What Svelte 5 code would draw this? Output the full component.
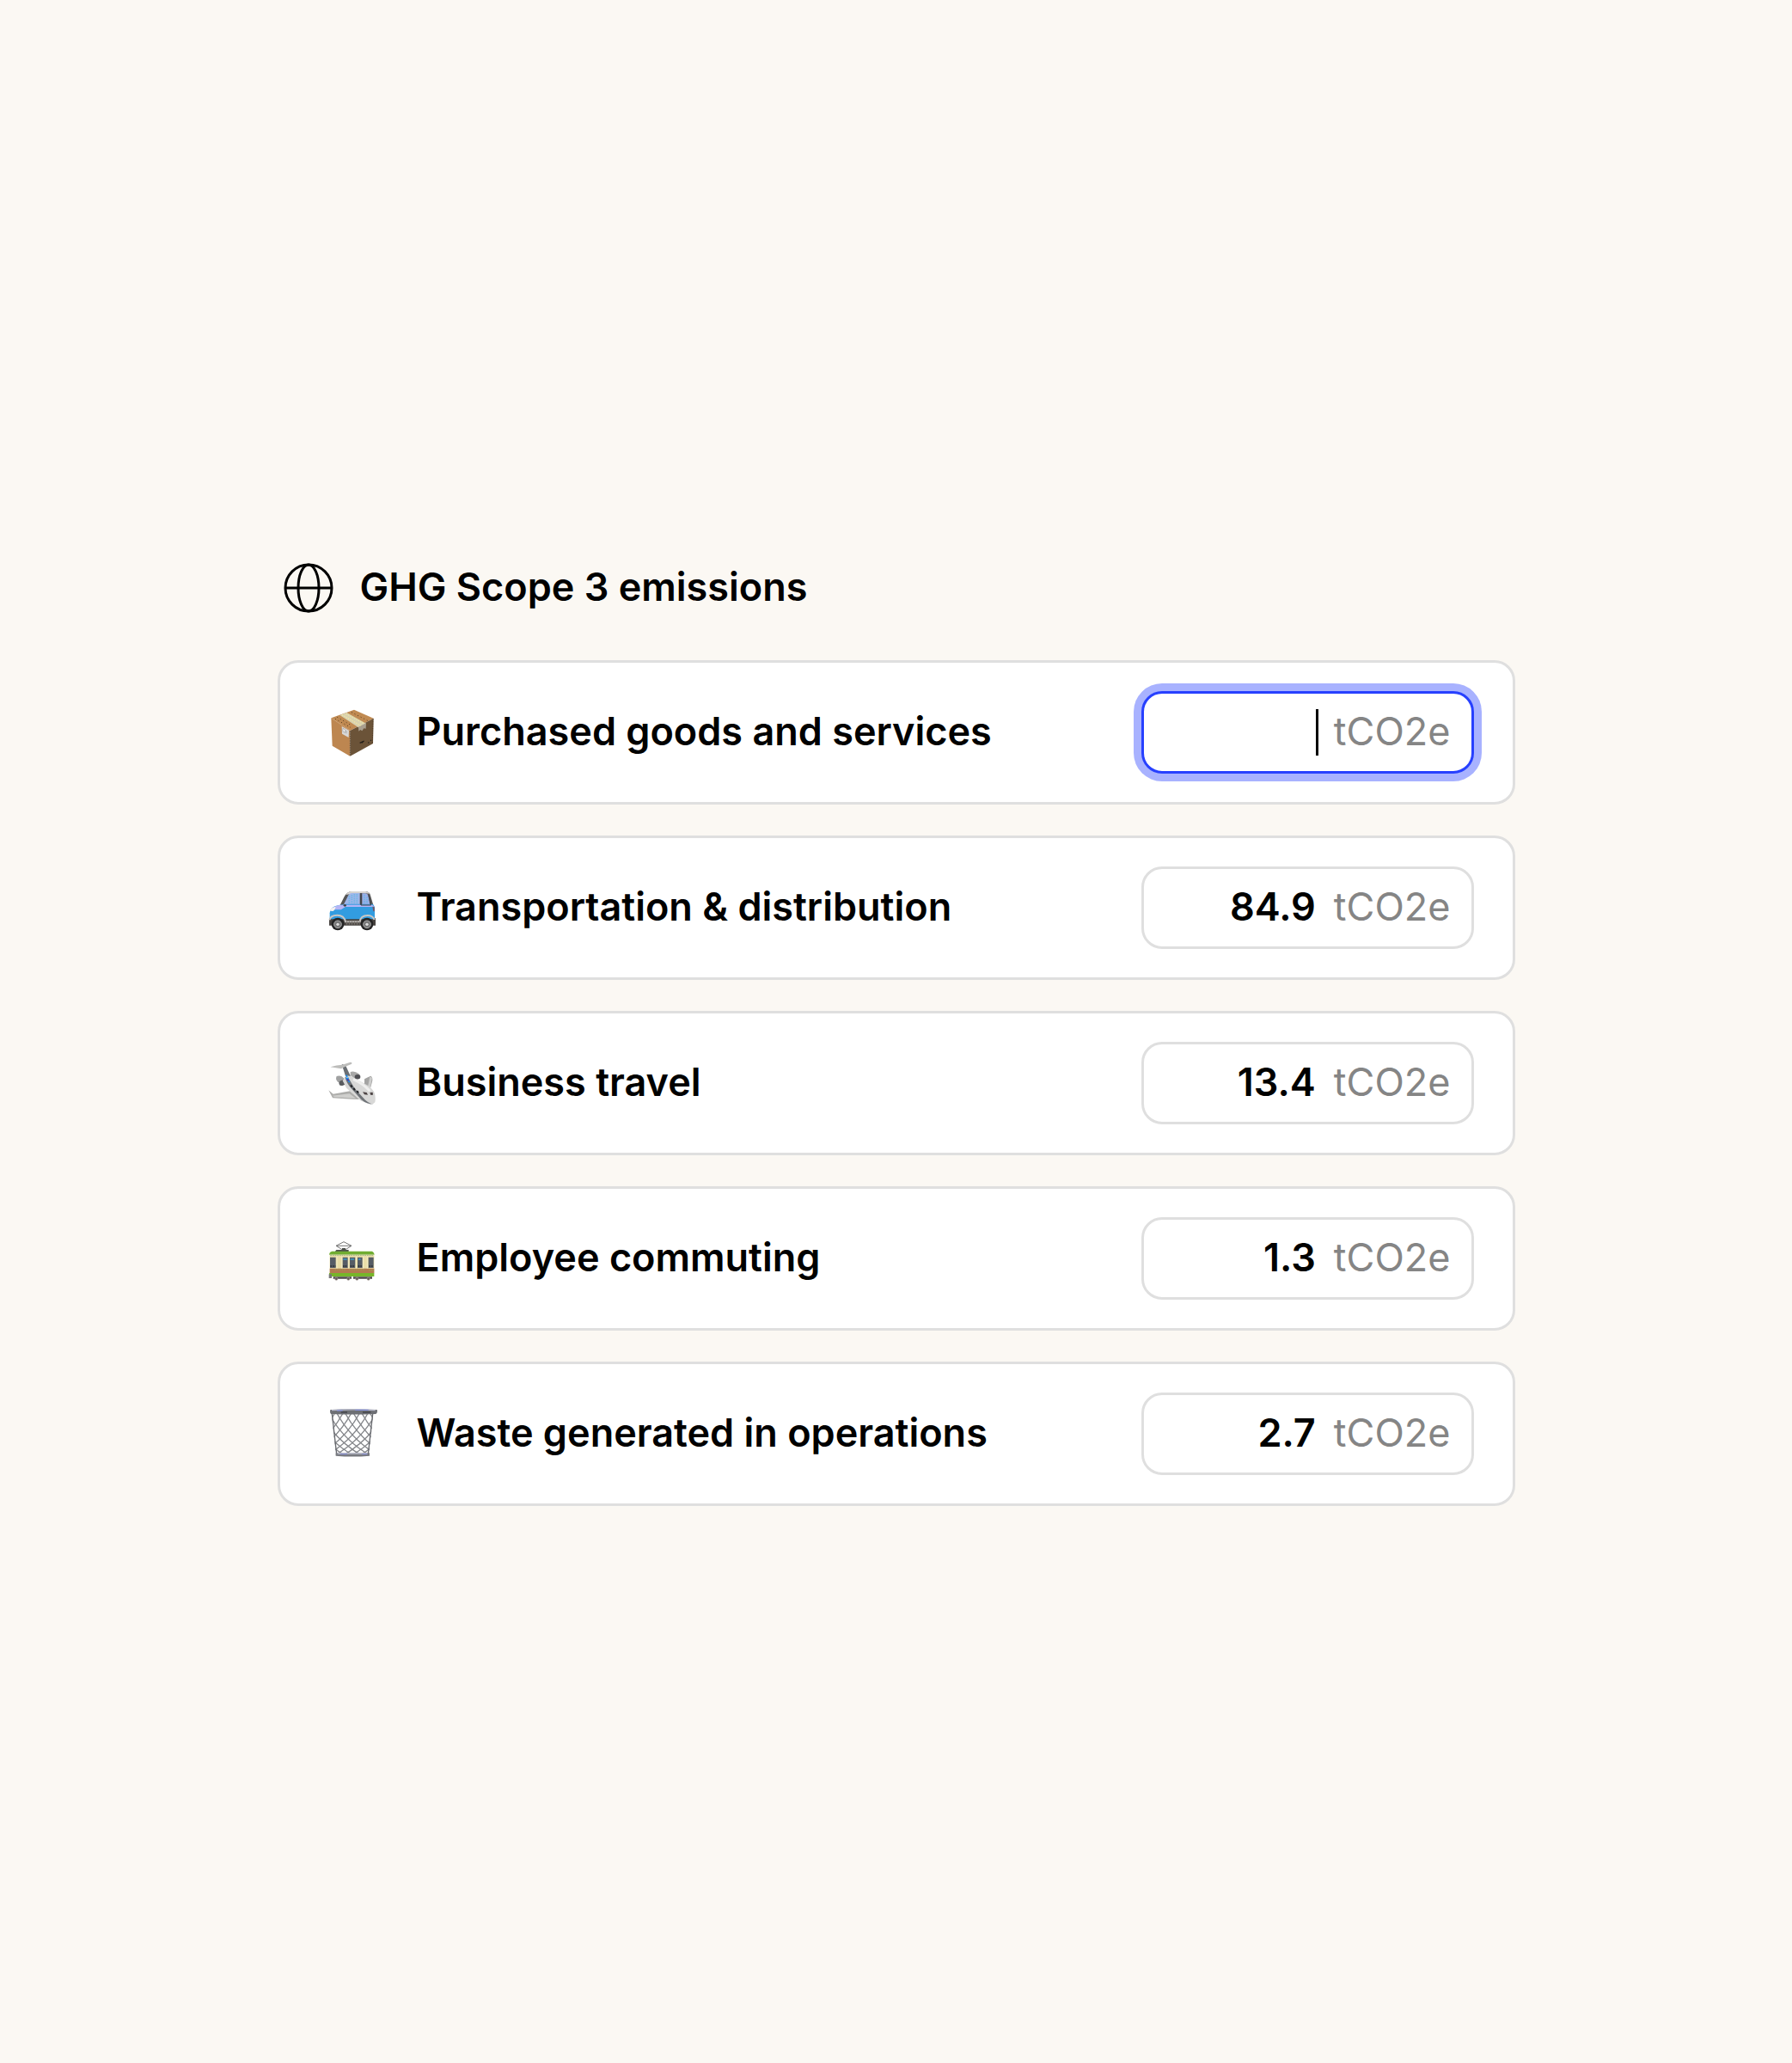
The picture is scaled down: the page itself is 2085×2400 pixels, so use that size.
<script>
  let rows = [
    { id: 'goods', label: 'Purchased goods and services', value: '' },
    { id: 'transport', label: 'Transportation & distribution', value: '84.9' },
    { id: 'travel', label: 'Business travel', value: '13.4' },
    { id: 'commuting', label: 'Employee commuting', value: '1.3' },
    { id: 'waste', label: 'Waste generated in operations', value: '2.7' }
  ];

  let active = 'goods';

  // diagonal wires of the waste basket
  const wires = [-112, -83, -54, -25, 4, 33, 62, 91, 120, 149, 178];
</script>

<main class="page">
  <section class="scope">
    <header class="header">
      <svg class="globe" viewBox="0 0 72 72" fill="none" stroke="#000" stroke-width="3" aria-hidden="true">
        <circle cx="36" cy="36" r="27" />
        <ellipse cx="36" cy="36" rx="12" ry="27" />
        <path d="M9 36h54" />
      </svg>
      <h1>GHG Scope 3 emissions</h1>
    </header>

    <form class="list" on:submit|preventDefault>
      {#each rows as row (row.id)}
        <div class="card">
          {#if row.id === 'goods'}
            <svg class="icon" viewBox="30 36 180 180" aria-hidden="true">
              <path d="M46 76 126 47 194 77 112 120Z" fill="#c08a52" />
              <path d="M46 76 112 120 112 209 50 173Z" fill="#bd8650" />
              <path d="M112 120 194 77 192 165 112 209Z" fill="#6b5338" />
              <path d="M76 66 100 57 168 95 141 109Z" fill="#d9d2b0" />
              <path d="m84 65 66 38m-52-42 62 34" stroke="#f2e7a0" stroke-width="4" stroke-dasharray="4 4" />
              <path d="M141 107 168 94 167 113 160 112 154 121 148 117 142 122Z" fill="#a99f8f" />
              <path d="m83 105 25 14-1 25-23-13Z" fill="#d8d8d8" />
              <path d="m87 112 8 5v10l-8-4Zm12 8v10" fill="#f6f6f6" stroke="#999" stroke-width="2" />
              <path d="m60 79 54 30m-47-36 50 29m0-46 56 29" stroke="#553a20" stroke-width="3" stroke-dasharray="3 9" fill="none" />
              <path d="m112 122v85m80-128-2 84" stroke="#3f3020" stroke-width="2" stroke-dasharray="4 4" />
              <path d="m146 163 15-7m-9 7 6-5m17 4h3m5-8h3" stroke="#211d18" stroke-width="4" />
            </svg>
          {:else if row.id === 'transport'}
            <svg class="icon" viewBox="30 33 180 180" aria-hidden="true">
              <path d="M39 160h162v25H39Z" fill="#46423f" />
              <path d="M75 118 92 84Q101 68 117 66h48q15 0 18 14l11 37Z" fill="#565656" />
              <path d="M97 78Q105 67 117 66h48q11 0 16 8-39-5-84 4Z" fill="#d7d4d1" />
              <path d="M89 113 104 83q4-10 15-11h27v41Z" fill="#9fb6ea" />
              <path d="M154 73h12q8 1 10 9l5 30h-27Z" fill="#9aaee6" />
              <path d="M109 82v26m9-30v30m9-32v34m9-34v34m26-32v30m9-22v22" stroke="#6ab8e4" stroke-width="5" stroke-dasharray="4 3" />
              <path d="M41 142q0-22 31-28l26-4h91q9 3 9 17v36H41Z" fill="#329ce0" />
              <path d="M45 127q12-11 32-14h111q7 2 8 7H98l-18 10H58Z" fill="#b5b5f5" />
              <path d="M96 120h101v8H84Z" fill="#329ce0" />
              <path d="M150 72v42h35l-9-35m-26 0v35" fill="none" stroke="#3c4148" stroke-width="3" />
              <path d="M42 134q0-8 7-10l13-5q-2 12-9 16Z" fill="#f4f2f0" />
              <path d="M190 119h6q3 7 1 17h-4Z" fill="#765666" />
              <path d="M40 166q4-17 27-17 24 0 29 23h50q3-22 27-22 18 0 24 15" fill="none" stroke="#c8c6c4" stroke-width="6" />
              <path d="M98 176h48" stroke="#77706a" stroke-width="12" stroke-dasharray="5 4" />
              <circle cx="69" cy="180" r="22" fill="#252525" />
              <circle cx="171" cy="180" r="22" fill="#252525" />
              <circle cx="69" cy="181" r="13" fill="#777" stroke="#aaa" stroke-width="3" />
              <circle cx="171" cy="181" r="13" fill="#777" stroke="#aaa" stroke-width="3" />
              <circle cx="69" cy="181" r="5" fill="#ddd" />
              <circle cx="171" cy="181" r="5" fill="#ddd" />
              <ellipse cx="94" cy="115" rx="5" ry="4" fill="#41444b" />
            </svg>
          {:else if row.id === 'travel'}
            <svg class="icon" viewBox="30 30 180 180" aria-hidden="true">
              <path d="M37 145 53 158 112 148 145 177q-52-1-94-5Z" fill="#adadab" />
              <path d="m50 164 60-7 22 16-74-4Z" fill="#cfcfcd" />
              <path d="M162 106q13-7 22-11 10 6 4 24l-6 22-20-15Z" fill="#a4a4a3" />
              <path d="m181 98 8 3-7 37-8-6Z" fill="#cdcdcc" />
              <path d="m83 54 13 4 18 39 12 28-27-19Z" fill="#6a6e73" />
              <path d="M43 64q22-8 42-8l28-9q9 1 3 7l-22 9-13 7Z" fill="#bdbdbb" />
              <path d="m65 96q9-4 18 1l18 15-8 13q-14-1-25-10-8-9-3-19Z" fill="#a0a1a1" />
              <ellipse cx="86" cy="119" rx="13" ry="9" fill="#595b5e" transform="rotate(-20 86 119)" />
              <path d="M113 81q14-5 29 6 7 6 5 14-8 10-18 4l-16-12Z" fill="#a8a8a7" />
              <ellipse cx="138" cy="98" rx="10" ry="8" fill="#4e4e52" />
              <path d="M97 96q15-5 33 8l45 25q18 13 23 28 4 16 1 30-9 11-25 4l-24-9-51-45-13-25Z" fill="#d8d8d7" />
              <path d="M94 98q7 25 21 39l36 41q19 16 43 16-13-2-29-15l-37-40-20-34Z" fill="#6f7378" />
              <path d="M123 107q35 15 58 41" fill="none" stroke="#efefee" stroke-width="9" />
              <path d="m98 92 4 7m-4 7 9-4m-1 11 5 3" stroke="#168ff5" stroke-width="5" />
              <path d="m101 107 6 4" stroke="#352fd0" stroke-width="4" />
              <path d="m114 127 5 7m5 4 5 6m7 3 5 7" stroke="#202225" stroke-width="6" />
              <path d="m156 151 14 2 4 8-12-1Zm25 2 10-1 1 9-8 1Z" fill="#4e4546" />
            </svg>
          {:else if row.id === 'commuting'}
            <svg class="icon" viewBox="30 27 180 180" aria-hidden="true">
              <path d="m84 86-21-13 27-14 27 14-21 13M63 73h54" fill="none" stroke="#777" stroke-width="3" />
              <path d="M64 87h43v7H59Zm20-6h12v7H84Z" fill="#4d514b" />
              <path d="M39 104q1-10 10-12h139q7 1 9 12Z" fill="#70ad32" />
              <path d="M41 104h155v64H41Z" fill="#e9dda7" />
              <path d="M41 152h155v17H41Z" fill="#b27b50" />
              <path d="M39 168h157v12H39Z" fill="#76b629" />
              <path d="M42 113h20v37H42Zm44 0h18v37H86Zm25 0h19v37h-19Zm27 0h17v37h-17Zm38 0h18v37h-18Z" fill="#565c65" />
              <path d="M66 110v42m17-42v42m24-42v42m26-42v42m25-42v42m14-42v42" stroke="#f3edc8" stroke-width="3" />
              <path d="M43 106h151" stroke="#a9b88e" stroke-width="4" stroke-dasharray="5 3" />
              <path d="M88 120h13m12 0h13m15 0h8" stroke="#3d9ac8" stroke-width="5" />
              <path d="M43 144h18m26 0h16m10 0h16m11 0h14m24 0h14" stroke="#35383d" stroke-width="6" stroke-dasharray="5 3" />
              <path d="M59 156h40m10 0h52m17 2h17" stroke="#9dac56" stroke-width="3" stroke-dasharray="4 4" />
              <path d="M38 172h10v14H38Z" fill="#777" />
              <path d="M53 181h64v7H53Zm70 0h66v7h-66Z" fill="#4d4947" />
              <g fill="#625a55" stroke="#aaa29b" stroke-width="2">
                <circle cx="64" cy="188" r="5" />
                <circle cx="106" cy="188" r="5" />
                <circle cx="136" cy="188" r="5" />
                <circle cx="176" cy="188" r="5" />
              </g>
            </svg>
          {:else}
            <svg class="icon" viewBox="30 39 180 180" aria-hidden="true">
              <defs>
                <clipPath id="basket">
                  <path d="M47 59h146l-15 146H63Z" />
                </clipPath>
              </defs>
              <g clip-path="url(#basket)" fill="none" stroke="#85878b" stroke-width="4">
                {#each wires as x}
                  <path d="M{x} 50q52 100 154 158" />
                  <path d="M{240 - x} 50q-52 100-154 158" />
                {/each}
              </g>
              <path d="m49 60 16 140m126-140-16 140" stroke="#67696e" stroke-width="4" />
              <path d="M43 45q77-5 163 0 3 10-4 15-81 3-157 0-5-6-2-15Z" fill="#6d6f74" />
              <path d="M48 47q75-5 152 0" fill="none" stroke="#b9bccd" stroke-width="4" />
              <path d="M66 48h20m44-2h46" stroke="#8693e8" stroke-width="3" />
              <path d="M80 54h22m54 0h28" stroke="#44464b" stroke-width="4" />
              <path d="M62 196h118v10q-59 5-118 0Z" fill="#77797e" />
              <path d="M68 198h104" stroke="#bfc2d0" stroke-width="4" />
              <path d="M78 200h24m52 0h18" stroke="#8c93df" stroke-width="3" />
            </svg>
          {/if}

          <label for={row.id}>{row.label}</label>

          <div class="field" class:active={active === row.id}>
            <input
              id={row.id}
              type="text"
              inputmode="decimal"
              bind:value={row.value}
              on:focus={() => (active = row.id)}
            />
            {#if active === row.id}
              <span class="caret"></span>
            {/if}
            <span class="unit">tCO2e</span>
          </div>
        </div>
      {/each}
    </form>
  </section>
</main>

<style>
  :global(body) {
    margin: 0;
    background: #fbf8f3;
  }

  .page {
    min-height: 100vh;
    box-sizing: border-box;
    padding: 48px;
    display: flex;
    align-items: center;
    justify-content: center;
    font-family: Inter, 'Liberation Sans', sans-serif;
    font-size: 45px;
    line-height: 60px;
    color: #000;
  }

  .scope {
    width: 100%;
    max-width: 1440px;
  }

  .header {
    display: flex;
    align-items: center;
    gap: 24px;
    margin-bottom: 48px;
  }

  .globe {
    width: 72px;
    height: 72px;
    flex-shrink: 0;
  }

  h1 {
    margin: 0;
    font-size: inherit;
    font-weight: 600;
  }

  h1,
  label,
  input,
  .unit {
    padding: 0 0 3px;
  }

  .list {
    display: flex;
    flex-direction: column;
    gap: 36px;
  }

  .card {
    display: flex;
    align-items: center;
    gap: 45px;
    padding: 33px 45px 33px 54px;
    background: #fff;
    border: 3px solid #dfdfdf;
    border-radius: 24px;
  }

  .icon {
    width: 60px;
    height: 60px;
    flex-shrink: 0;
  }

  label {
    flex: 1;
    font-weight: 600;
  }

  .field {
    display: flex;
    align-items: center;
    box-sizing: border-box;
    width: 387px;
    height: 96px;
    padding: 0 24px;
    border: 3px solid #dfdfdf;
    border-radius: 24px;
    background: #fff;
  }

  .field.active {
    border-color: #2740ff;
    box-shadow: 0 0 0 9px #a8b2ff;
  }

  input {
    flex: 1;
    min-width: 0;
    border: none;
    outline: none;
    background: none;
    font: inherit;
    font-weight: 600;
    color: inherit;
    text-align: right;
    caret-color: transparent;
  }

  .caret {
    width: 3px;
    height: 54px;
    margin-right: -3px;
    background: #000;
  }

  .unit {
    margin-left: 21px;
    font-weight: 400;
    color: #858585;
  }
</style>
